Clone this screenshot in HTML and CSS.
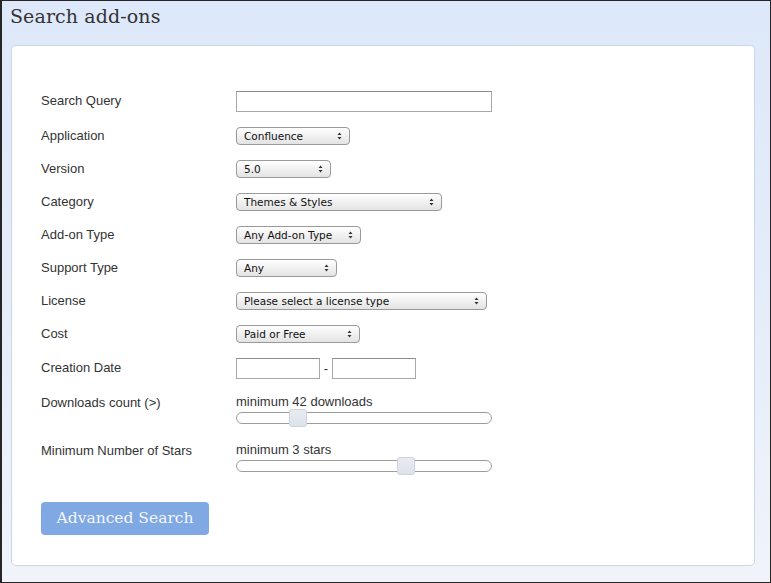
FILE: index.html
```html
<!DOCTYPE html>
<html>
<head>
<meta charset="utf-8">
<title>Search add-ons</title>
<link rel="stylesheet" href="styles.css">
</head>
<body>
<div class="frame">
  <h1 class="title">Search add-ons</h1>
  <div class="card">
    <form class="form">
      <div class="row">
        <label class="label">Search Query</label>
        <input class="text wide" type="text">
      </div>
      <div class="row">
        <label class="label">Application</label>
        <select class="sel w-app"><option>Confluence</option></select>
      </div>
      <div class="row">
        <label class="label">Version</label>
        <select class="sel w-ver"><option>5.0</option></select>
      </div>
      <div class="row">
        <label class="label">Category</label>
        <select class="sel w-cat"><option>Themes &amp; Styles</option></select>
      </div>
      <div class="row">
        <label class="label">Add-on Type</label>
        <select class="sel w-type"><option>Any Add-on Type</option></select>
      </div>
      <div class="row">
        <label class="label">Support Type</label>
        <select class="sel w-sup"><option>Any</option></select>
      </div>
      <div class="row">
        <label class="label">License</label>
        <select class="sel w-lic"><option>Please select a license type</option></select>
      </div>
      <div class="row">
        <label class="label">Cost</label>
        <select class="sel w-cost"><option>Paid or Free</option></select>
      </div>
      <div class="row">
        <label class="label">Creation Date</label>
        <div class="dates">
          <input class="text date" type="text">
          <span class="dash">-</span>
          <input class="text date" type="text">
        </div>
      </div>
      <div class="row top">
        <label class="label label-top">Downloads count (&gt;)</label>
        <div class="slider">
          <div class="slider-text">minimum 42 downloads</div>
          <input class="range" type="range" min="0" max="100" value="22">
        </div>
      </div>
      <div class="row top">
        <label class="label label-top">Minimum Number of Stars</label>
        <div class="slider">
          <div class="slider-text">minimum 3 stars</div>
          <input class="range" type="range" min="0" max="100" value="68">
        </div>
      </div>
      <div class="actions">
        <button class="btn" type="button">Advanced Search</button>
      </div>
    </form>
  </div>
</div>
</body>
</html>
```
FILE: styles.css
```css
html, body {
  margin: 0;
  padding: 0;
}
body {
  width: 771px;
  height: 583px;
  overflow: hidden;
}
.frame {
  box-sizing: border-box;
  width: 771px;
  height: 583px;
  border: 1px solid #262626;
  border-left-width: 2px;
  background: linear-gradient(to bottom, #dde8fa 0%, #e6edf9 55%, #f0f4fa 100%);
  display: flex;
  flex-direction: column;
}
.title {
  margin: 0;
  padding: 3px 0 0 8px;
  height: 41px;
  box-sizing: border-box;
  font-family: "DejaVu Serif", "Liberation Serif", serif;
  font-weight: normal;
  font-size: 19px;
  line-height: 24px;
  color: #333;
  letter-spacing: 0.1px;
}
.card {
  margin: 3px 15px 0 9px;
  height: 521px;
  box-sizing: border-box;
  background: #fff;
  border: 1px solid #c9d7ec;
  border-radius: 5px;
  padding: 45px 0 0 29px;
}
.form {
  display: flex;
  flex-direction: column;
  gap: 15px;
}
.row {
  display: flex;
  align-items: center;
}
.row.top {
  align-items: flex-start;
}
.label {
  width: 195px;
  flex: none;
  padding-bottom: 2px;
  font-family: "Liberation Sans", Arial, sans-serif;
  font-size: 13px;
  line-height: 15px;
  color: #333;
}
.label-top {
  padding-bottom: 0;
  padding-top: 1px;
}
.text {
  box-sizing: border-box;
  height: 21px;
  margin: 0;
  padding: 0 3px;
  border: 1px solid #a8a8a8;
  border-top-color: #8c8c8c;
  background: #fff;
  border-radius: 0;
  outline: none;
}
.wide {
  width: 256px;
}
.dates {
  display: flex;
  align-items: center;
}
.date {
  width: 84px;
}
.dash {
  width: 12px;
  text-align: center;
  font-family: "Liberation Sans", Arial, sans-serif;
  font-size: 13px;
  color: #333;
}
.sel {
  -webkit-appearance: none;
  appearance: none;
  box-sizing: border-box;
  height: 18px;
  margin: 0;
  padding: 0 18px 0 7px;
  border: 1px solid #9a9a9a;
  border-radius: 4px;
  font-family: "DejaVu Sans", Verdana, sans-serif;
  font-size: 10.5px;
  line-height: 16px;
  color: #111;
  background-color: #eee;
  background-image:
    url("data:image/svg+xml;utf8,<svg xmlns='http://www.w3.org/2000/svg' width='5' height='8' viewBox='0 0 5 8'><path d='M2.5 0.5 L4.5 3 L0.5 3 Z M0.5 5 L4.5 5 L2.5 7.5 Z' fill='%23333'/></svg>"),
    linear-gradient(to bottom, #ffffff 0%, #f1f1f1 50%, #e3e3e3 100%);
  background-repeat: no-repeat, no-repeat;
  background-position: right 7px center, 0 0;
  background-size: 5px 8px, 100% 100%;
  outline: none;
}
.w-app { width: 114px; }
.w-ver { width: 95px; }
.w-cat { width: 206px; }
.w-type { width: 125px; }
.w-sup { width: 101px; }
.w-lic { width: 251px; }
.w-cost { width: 124px; }
.slider {
  display: flex;
  flex-direction: column;
  width: 256px;
}
.slider-text {
  font-family: "Liberation Sans", Arial, sans-serif;
  font-size: 13px;
  line-height: 15px;
  color: #333;
}
.range {
  -webkit-appearance: none;
  appearance: none;
  width: 256px;
  height: 18px;
  margin: 0;
  background: transparent;
  outline: none;
}
.range::-webkit-slider-runnable-track {
  box-sizing: border-box;
  height: 12px;
  background: #fff;
  border: 1px solid #9c9c9c;
  border-radius: 6px;
}
.range::-webkit-slider-thumb {
  -webkit-appearance: none;
  appearance: none;
  box-sizing: border-box;
  width: 18px;
  height: 18px;
  margin-top: -4px;
  background: linear-gradient(to bottom, #e8ecf1, #dde3ea);
  border: 1px solid #cbd3de;
  border-radius: 3px;
}
.actions {
  margin-top: 12px;
}
.btn {
  width: 168px;
  height: 33px;
  margin: 0;
  padding: 0;
  border: none;
  border-radius: 4px;
  background: #80a8e3;
  color: #f3f6fc;
  font-family: "DejaVu Serif", "Liberation Serif", serif;
  font-size: 15.5px;
  line-height: 33px;
  cursor: pointer;
}
```
